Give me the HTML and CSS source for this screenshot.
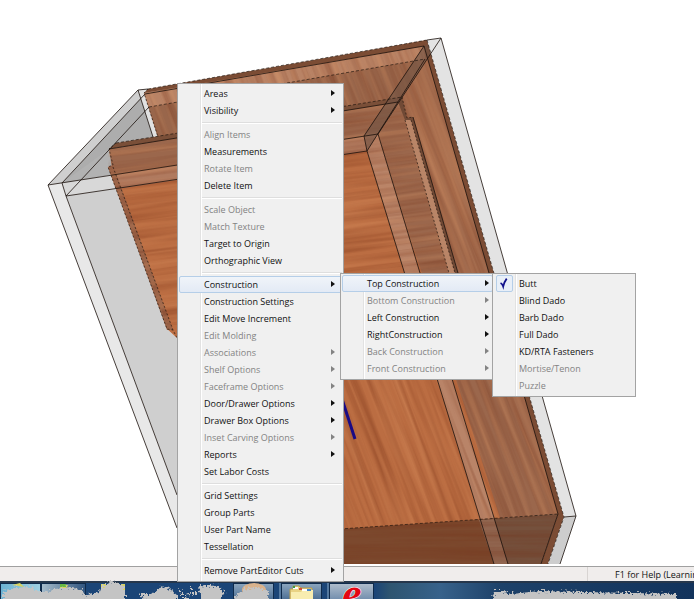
FILE: index.html
```
<!DOCTYPE html>
<html lang="en">
<head>
<meta charset="utf-8">
<title>Part Editor</title>
<link rel="stylesheet" href="styles.css">
</head>
<body>
<main class="viewport">
<svg class="scene" viewBox="0 0 694 564" preserveAspectRatio="xMinYMin slice" aria-hidden="true">
  <defs>
    <filter id="grain" x="0" y="0" width="1" height="1" color-interpolation-filters="sRGB">
      <feTurbulence type="fractalNoise" baseFrequency="0.005 0.17" numOctaves="3" seed="4"/>
      <feColorMatrix values="0 0 0 0 0.45  0 0 0 0 0.18  0 0 0 0 0.08  1.9 0 0 0 -0.72"/>
    </filter>
    <filter id="shine" x="0" y="0" width="1" height="1" color-interpolation-filters="sRGB">
      <feTurbulence type="fractalNoise" baseFrequency="0.005 0.14" numOctaves="3" seed="11"/>
      <feColorMatrix values="0 0 0 0 0.9  0 0 0 0 0.62  0 0 0 0 0.42  1.7 0 0 0 -0.75"/>
    </filter>
    <clipPath id="flat"><path d="M109 149L116 143L402 97L407 118L413 117L473 325H167L108 167Z"/></clipPath>
    <clipPath id="steep"><path d="M340 325H473L458 273L413 117L407 118L402 97L158 137L144 93L427 40L564 517L558 514L340 529Z"/></clipPath>
    <clipPath id="front"><path d="M340 529L558 514L541 564H340Z"/></clipPath>
  </defs>

  <!-- glass box, left side -->
  <path fill="#cfcfcf" d="M48 185L138 90L148 89L158 137L116 143L108 167L167 329L177 338V495L66 196Z"/>
  <path fill="#adadad" d="M62 183L145 94L154 137L116 143L109 149L70 183Z"/>
  <path fill="#e1e1e1" d="M138 90L148 89L144 93L158 137L153 137Z"/>
  <path fill="#b2b2b2" d="M62 183L109 149L113 165L108 167L111 175Z"/>
  <path fill="#d8d8d8" d="M62 183L111 175L116 189L66 196Z"/>
  <path fill="#e8e8e8" d="M48 185L62 183L66 196L177 495V528Z"/>

  <!-- wood faces -->
  <path fill="#a26b4e" d="M144 93L427 40L564 517L558 514L340 529V138H158Z"/>
  <path fill="#99664b" d="M149 107L425 59L402 97L158 137Z"/>
  <path fill="#b98365" d="M144 93L424 46L425 59L149 107Z"/>
  <path fill="#bb6d42" d="M108 167L370 120L520 564H340V400H180L177 338L167 329Z"/>
  <path fill="#9b674c" d="M109 149L402 97L407 118L413 117L475 325L558 514L500 518L378 134L113 175Z"/>
  <path fill="#b07a5f" d="M113 175L378 134L494 564H508L367 151L118 189Z"/>
  <path fill="#b98468" d="M367 151L378 134L508 564H494Z"/>
  <path fill="#9a6449" d="M108 167L113 165L173 330H167Z"/>
  <path fill="#7c492e" d="M340 529L558 514L541 564H340Z"/>
  <path fill="#75513d" d="M479 520L558 514L541 564H494Z"/>
  <path fill="#916650" d="M479 520L494 519L508 564H494Z"/>

  <g clip-path="url(#flat)"><g transform="rotate(-7 240 200)" opacity=".42">
    <rect x="50" y="20" width="500" height="400" filter="url(#grain)"/><rect x="50" y="20" width="500" height="400" filter="url(#shine)"/></g></g>
  <g clip-path="url(#steep)"><g transform="rotate(69 420 300)" opacity=".42">
    <rect x="100" y="0" width="650" height="620" filter="url(#grain)"/><rect x="100" y="0" width="650" height="620" filter="url(#shine)"/></g></g>
  <g clip-path="url(#front)" opacity=".4"><rect x="330" y="500" width="240" height="70" filter="url(#grain)"/></g>

  <!-- board edges -->
  <path fill="#7b4c34" d="M144 93L148 89L427 40L564 517L548 564H541L558 514L424 46Z"/>
  <path fill="#7a4f38" d="M109 149L116 143L402 97L398 102Z"/>
  <path fill="#b98567" d="M405 120L412 118L455 273H449Z"/>
  <path fill="#704935" d="M398 102L402 97L407 118L413 117L458 273H455L411 120H405Z"/>
  <path fill="#705345" fill-opacity=".6" d="M424 46L441 38L378 134L367 151L364 136Z"/>
  <path fill="#e3e3e3" d="M427 40L441 38L576 516L564 517Z"/>
  <path fill="#cdcdcd" d="M564 517L576 516L560 564H548Z"/>

  <g class="edges">
    <path d="M177 528L48 185L138 90L148 89M427 40L441 38L576 516L560 564M564 517L576 516"/>
    <path d="M48 185L378 134L441 38M66 196L367 151L425 59M62 183L66 196L177 495M62 183L145 94L424 46L364 136L367 151L494 564M378 134L508 564M66 196L149 107M138 90L153 137"/>
    <path d="M109 149L398 102M424 46L558 514L541 564M413 117L458 273"/>
    <path class="hidden-edge" stroke-dasharray="3 2" d="M149 107L425 59M148 89L427 40M427 40L564 517L548 564M116 143L402 97M340 529L558 514"/>
    <path class="hidden-edge" stroke-dasharray="2 2" d="M148 89L144 93L158 137M116 143L109 149L113 165L108 167L167 329L173 330L177 338M113 167L173 330M402 97L407 118L413 117M405 120L449 273M411 120L455 273"/>
  </g>
  <path class="axis" d="M341 396L355 439"/>
</svg>
</main>

<footer class="status"><span class="status-main"></span><span class="status-help">F1 for Help (Learnin</span></footer>

<nav class="taskbar">
  <button class="task task-sky" aria-label="Window 1"></button>
  <button class="task task-mist" aria-label="Window 2"></button>
  <span class="task-gap"></span>
  <button class="task task-app" aria-label="Window 3"></button>
  <span class="task-stack"></span>
  <button class="task task-app" aria-label="Folders"><svg width="26" height="17" viewBox="0 0 26 17"><path fill="#e9d384" stroke="#b79c4c" d="M1 17V5H4V2H10L12 4H23V17Z"/><path fill="#f8edb0" d="M2 17V8H12L14 6H24V17Z"/><path fill="#fff" d="M4 3H9V5H4ZM13 5H22V7H13Z"/><path fill="#3b9b4a" d="M4 2H6V4H4Z"/><path fill="#d34b38" d="M10 4H13V6H10Z"/><path fill="#3f83c9" d="M18 5H22V7H18Z"/></svg></button>
  <span class="task-stack"></span>
  <button class="task task-active" aria-label="Browser"><svg width="30" height="18" viewBox="0 0 30 18"><text class="logo" x="5" y="24">e</text></svg></button>
  <svg class="smudges" viewBox="0 0 694 22" preserveAspectRatio="xMinYMin slice" aria-hidden="true">
    <defs><filter id="rough" x="-.1" y="-.4" width="1.2" height="1.8"><feTurbulence type="fractalNoise" baseFrequency=".5" numOctaves="2" seed="3"/><feDisplacementMap in="SourceGraphic" scale="9" xChannelSelector="R" yChannelSelector="G"/></filter></defs>
    <path fill="#d9d45e" d="M12 8L20 6L24 10ZM60 8H68L66 12H60ZM101 7H106V12H101ZM121 7H125V16H121Z"/>
    <path fill="#67b944" d="M60 7H66V10H60Z"/>
    <ellipse cx="254" cy="13" rx="12" ry="7" fill="#d9b28c"/>
    <g fill="#c4c4c4" filter="url(#rough)">
      <path d="M2 15L14 11L30 10L40 15L48 15L55 12L70 10L82 13L86 20L80 28H4Z"/>
      <path d="M84 19L99 15L101 10L112 4L118 6L125 10V28H86Z"/>
      <path d="M138 17L152 17L162 9L170 12L178 19V28H150Z"/>
      <path d="M199 8L218 9L225 15L218 26H201Z"/>
      <path d="M234 20L244 12L258 10L268 14L268 26H236Z"/>
      <path d="M494 14L502 14L510 17L540 14L677 17V28H492Z"/>
      <path d="M178 12L182 12L180 15ZM187 16L191 16L189 20ZM190 10H193V13H190ZM184 20H188V23H184ZM193 15H197V18H193ZM181 17H184V19H181Z"/>
    </g>
  </svg>
</nav>

<ul class="menu menu-root">
  <li><button class="item more">Areas</button></li>
  <li><button class="item more">Visibility</button></li>
  <li class="rule"></li>
  <li><button class="item" disabled>Align Items</button></li>
  <li><button class="item">Measurements</button></li>
  <li><button class="item" disabled>Rotate Item</button></li>
  <li><button class="item">Delete Item</button></li>
  <li class="rule"></li>
  <li><button class="item" disabled>Scale Object</button></li>
  <li><button class="item" disabled>Match Texture</button></li>
  <li><button class="item">Target to Origin</button></li>
  <li><button class="item">Orthographic View</button></li>
  <li class="rule"></li>
  <li class="branch"><button class="item more open">Construction</button>
    <ul class="menu menu-sides">
      <li class="branch"><button class="item more open">Top Construction</button>
        <ul class="menu menu-joints">
          <li><button class="item"><svg class="check" width="17" height="17" viewBox="0 0 17 17"><path d="M4 8Q6 9 7 12Q8 7 11 3"/></svg>Butt</button></li>
          <li><button class="item">Blind Dado</button></li>
          <li><button class="item">Barb Dado</button></li>
          <li><button class="item">Full Dado</button></li>
          <li><button class="item">KD/RTA Fasteners</button></li>
          <li><button class="item" disabled>Mortise/Tenon</button></li>
          <li><button class="item" disabled>Puzzle</button></li>
        </ul>
      </li>
      <li><button class="item more" disabled>Bottom Construction</button></li>
      <li><button class="item more">Left Construction</button></li>
      <li><button class="item more">RightConstruction</button></li>
      <li><button class="item more" disabled>Back Construction</button></li>
      <li><button class="item more" disabled>Front Construction</button></li>
    </ul>
  </li>
  <li><button class="item">Construction Settings</button></li>
  <li><button class="item">Edit Move Increment</button></li>
  <li><button class="item" disabled>Edit Molding</button></li>
  <li><button class="item more" disabled>Associations</button></li>
  <li><button class="item more" disabled>Shelf Options</button></li>
  <li><button class="item more" disabled>Faceframe Options</button></li>
  <li><button class="item more">Door/Drawer Options</button></li>
  <li><button class="item more">Drawer Box Options</button></li>
  <li><button class="item more" disabled>Inset Carving Options</button></li>
  <li><button class="item more">Reports</button></li>
  <li><button class="item">Set Labor Costs</button></li>
  <li class="rule"></li>
  <li><button class="item">Grid Settings</button></li>
  <li><button class="item">Group Parts</button></li>
  <li><button class="item">User Part Name</button></li>
  <li><button class="item">Tessellation</button></li>
  <li class="rule"></li>
  <li><button class="item more">Remove PartEditor Cuts</button></li>
</ul>
</body>
</html>
```
FILE: styles.css
```
* { box-sizing: border-box; }

body {
  margin: 0;
  height: 100vh;
  display: flex;
  flex-direction: column;
  position: relative;
  overflow: hidden;
  background: #fff;
  font: 9px/17px "Open Sans", "Noto Sans", sans-serif;
  color: #111;
}

.viewport { flex: 1; min-height: 0; padding-bottom: 2px; }
.scene { display: block; width: 100%; height: 100%; }
.edges path { fill: none; stroke: #1c120d; stroke-width: 1; stroke-opacity: .8; }
.edges .hidden-edge { stroke-opacity: .65; }
.axis { fill: none; stroke: #1a0a85; stroke-width: 3; }

.status {
  display: flex;
  height: 15px;
  border-top: 1px solid #a0a0a0;
  background: #f0edec;
  line-height: 15px;
}
.status-main { flex: 1; border-right: 1px solid #d8d4d2; }
.status-help { flex: 0 0 106px; padding-left: 27px; white-space: nowrap; overflow: hidden; }

.taskbar {
  display: flex;
  position: relative;
  height: 18px;
  border-top: 2px solid #26374c;
  background: linear-gradient(90deg, #1b4577 0, #1b4577 375px, #2e5570 390px, #37628b 440px, #1d4169 500px, #12335c 100%);
}
.task {
  height: 16px;
  padding: 0;
  border: 1px solid #0f2b4c;
  border-bottom: 0;
  overflow: hidden;
  text-align: center;
}
.task svg { display: block; margin: 0 auto; }
.task-sky { width: 41px; background: linear-gradient(90deg, #6cb3d4, #9fd0e2); }
.task-mist { width: 45px; background: linear-gradient(90deg, #a6bccb, #31557f); }
.task-app { width: 41px; background: linear-gradient(#8aa4bd, #4e7196); }
.task-active { width: 45px; background: linear-gradient(#aebccb, #7590ae); }
.task-gap { width: 147px; }
.task-stack { width: 7px; border-right: 2px solid #54799f; }
.logo { font: italic bold 44px "Liberation Serif", serif; fill: #e30613; stroke: #fff; stroke-width: 1; paint-order: stroke; }
.smudges { position: absolute; left: 0; top: -6px; width: 100%; height: 22px; }

.menu {
  position: absolute;
  margin: 0;
  padding: 1px 1px 2px;
  list-style: none;
  border: 1px solid #a3a3a3;
  background: linear-gradient(90deg, #f0f0f0 22px, #e2e2e2 22px, #e2e2e2 23px, #fff 23px, #fff 24px, #f0f0f0 24px);
}
.menu-root { left: 177px; top: 83px; width: 167px; }
.menu-sides { left: 161px; top: -3px; width: 155px; }
.menu-joints { left: 150px; top: -2px; width: 144px; }
.branch { position: relative; }

.item {
  display: block;
  position: relative;
  width: 100%;
  height: 17px;
  padding: 0 0 0 24px;
  border: 1px solid transparent;
  border-radius: 2px;
  background: none;
  font: inherit;
  line-height: 15px;
  text-align: left;
  color: #111;
  white-space: nowrap;
}
.item:disabled { color: #838383; }
.open { border-color: #b5cee8; background: linear-gradient(#f0f4f9, #e3eaf5); }
.more::after {
  content: "";
  position: absolute;
  right: 6px;
  top: 4px;
  border: solid transparent;
  border-width: 3px 0 3px 4px;
  border-left-color: currentColor;
}
.menu-sides .more::after { right: 3px; }
.rule {
  height: 7px;
  margin-left: 23px;
  background: linear-gradient(transparent 3px, #dedede 3px, #dedede 4px, #fff 4px, #fff 5px, transparent 5px);
}
.check {
  position: absolute;
  left: 1px;
  top: -1px;
  border: 1px solid #b5cee8;
  border-radius: 2px;
  background: #e8eff8;
}
.check path { fill: none; stroke: #12128c; stroke-width: 2; }
```
